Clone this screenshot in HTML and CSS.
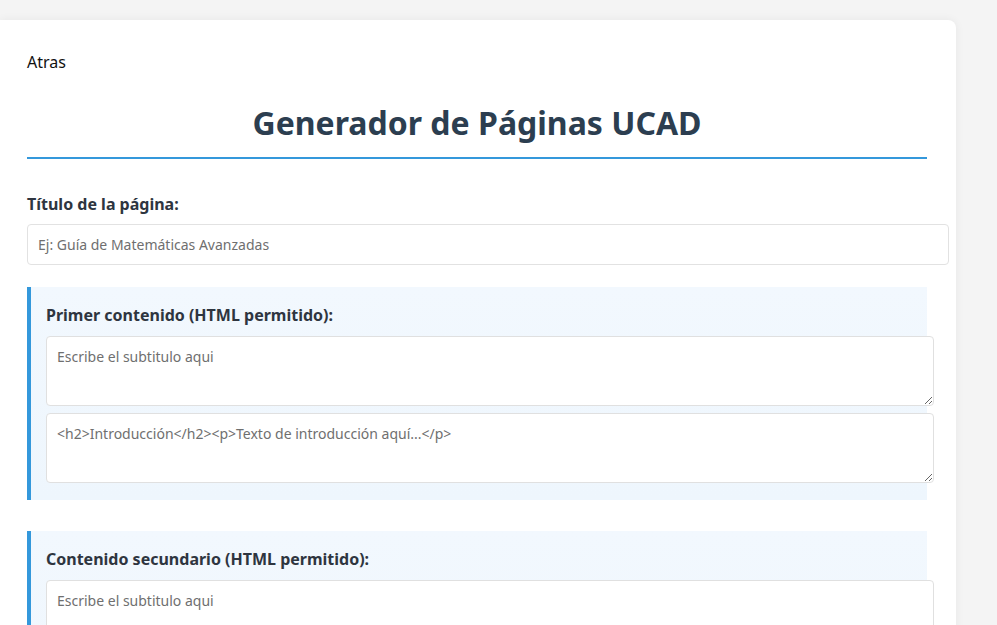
FILE: index.html
```html
<!DOCTYPE html>
<html lang="es">
<head>
<meta charset="utf-8">
<title>Generador de Páginas UCAD</title>
<link rel="stylesheet" href="styles.css">
</head>
<body>
<div class="card">
  <div class="back"><a href="#" class="back-link">Atras</a></div>
  <h1 class="title">Generador de Páginas UCAD</h1>
  <div class="field">
    <label class="label">Título de la página:</label>
    <input class="input" type="text" placeholder="Ej: Guía de Matemáticas Avanzadas">
  </div>
  <div class="section">
    <label class="label">Primer contenido (HTML permitido):</label>
    <textarea class="area" placeholder="Escribe el subtitulo aqui"></textarea>
    <textarea class="area" placeholder="&lt;h2&gt;Introducción&lt;/h2&gt;&lt;p&gt;Texto de introducción aquí...&lt;/p&gt;"></textarea>
  </div>
  <div class="section">
    <label class="label">Contenido secundario (HTML permitido):</label>
    <textarea class="area" placeholder="Escribe el subtitulo aqui"></textarea>
    <textarea class="area" placeholder="&lt;h2&gt;Desarrollo&lt;/h2&gt;&lt;p&gt;Texto aquí...&lt;/p&gt;"></textarea>
  </div>
</div>
</body>
</html>
```
FILE: styles.css
```css
html, body {
  margin: 0;
  padding: 0;
  background: #f4f4f4;
  font-family: "Noto Sans", "Open Sans", sans-serif;
  color: #333;
}
.card {
  width: 900px;
  margin-top: 20px;
  padding: 30px 29px 40px 27px;
  background: #fff;
  border-radius: 0 8px 8px 0;
  box-shadow: 0 0 10px rgba(0, 0, 0, 0.06);
}
.back {
  line-height: 24px;
  font-size: 16px;
}
.back-link {
  color: #111;
  text-decoration: none;
}
.title {
  margin: 27px 0 34px;
  padding-bottom: 12px;
  font-size: 32px;
  line-height: 44px;
  font-weight: 700;
  color: #2c3e50;
  text-align: center;
  border-bottom: 2px solid #3498db;
}
.field {
  margin-bottom: 22px;
}
.label {
  display: block;
  font-size: 16px;
  line-height: 22px;
  font-weight: 700;
  color: #2e3540;
  margin-bottom: 9px;
}
.input {
  display: block;
  width: 100%;
  padding: 10px;
  border: 1px solid #e2e2e2;
  border-radius: 4px;
  font-family: "Noto Sans", "Open Sans", sans-serif;
  font-size: 14px;
  line-height: 19px;
  color: #333;
  background: #fff;
  margin: 0;
}
.input::placeholder, .area::placeholder {
  color: #6f6f6f;
}
.section {
  background: linear-gradient(180deg, #f2f8fe 0%, #eef6fd 100%);
  border-left: 4px solid #3498db;
  padding: 17px 15px 17px;
  margin-bottom: 31px;
}
.section .label {
  margin-bottom: 10px;
}
.area {
  display: block;
  width: 100%;
  height: 48px;
  padding: 10px;
  margin: 0 0 7px;
  border: 1px solid #e0e0e0;
  border-radius: 4px;
  font-family: "Noto Sans", "Open Sans", sans-serif;
  font-size: 14px;
  line-height: 19px;
  color: #333;
  background: #fff;
  resize: vertical;
}
.area:last-child {
  margin-bottom: 0;
}
```
